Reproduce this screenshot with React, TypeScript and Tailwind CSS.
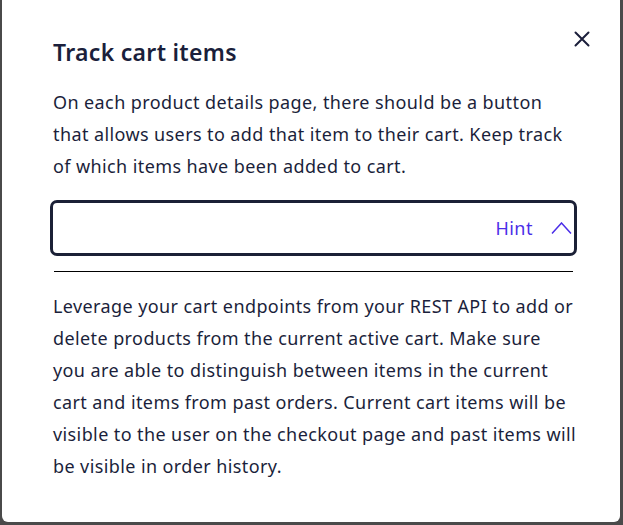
import { useState } from 'react';

export default function App() {
  const [open, setOpen] = useState(true);

  return (
    <div className="h-[525px] w-[623px] bg-[#4a4a4a] overflow-hidden relative" style={{ fontFamily: '"Noto Sans", sans-serif' }}>
      <div className="absolute left-[2px] top-[-8px] w-[618px] h-[530px] bg-white rounded-md">
        <div className="pt-[46px] pl-[51px] pr-[40px] text-[#1b1f3b]">
          <div className="flex items-start justify-between">
            <h2 className="text-[23px] font-semibold leading-[28px] tracking-[0.3px]">Track cart items</h2>
            <button className="-mt-[7px] -mr-[10px] text-[#1b1f3b]" aria-label="Close">
              <svg width="16" height="16" viewBox="0 0 16 16" fill="none" stroke="currentColor" strokeWidth="2" strokeLinecap="round">
                <path d="M1.5 1.5l13 13M14.5 1.5l-13 13" />
              </svg>
            </button>
          </div>

          <p className="mt-[20px] text-[18px] leading-[32px] tracking-[0.4px]">
            On each product details page, there should be a button that allows users to add that item to their cart. Keep track of which items have been added to cart.
          </p>

          {/* Hint toggle */}
          <button
            onClick={() => setOpen(!open)}
            className="mt-[18px] -ml-[3px] w-[527px] h-[56px] border-[3px] border-[#1b2036] rounded-[7px] flex items-center justify-end pr-[2px] gap-[18px]"
          >
            <span className="text-[18px] text-[#4b2ee8] tracking-[0.5px]">Hint</span>
            <svg width="21" height="12" viewBox="0 0 21 12" fill="none" stroke="#4b2ee8" strokeWidth="1.5">
              <path d="M1 11.5L10.5 1l9.5 10.5" />
            </svg>
          </button>

          {open && (
            <div>
              <div className="mt-[15px] ml-[1px] w-[519px] h-px bg-black" />
              <p className="mt-[18px] text-[18px] leading-[32px] tracking-[0.4px]">
                Leverage your cart endpoints from your REST API to add or delete products from the current active cart. Make sure
                <br />
                you are able to distinguish between items in the current
                <br />
                cart and items from past orders. Current cart items will be visible to the user on the checkout page and past items will be visible in order history.
              </p>
            </div>
          )}
        </div>
      </div>
    </div>
  );
}
